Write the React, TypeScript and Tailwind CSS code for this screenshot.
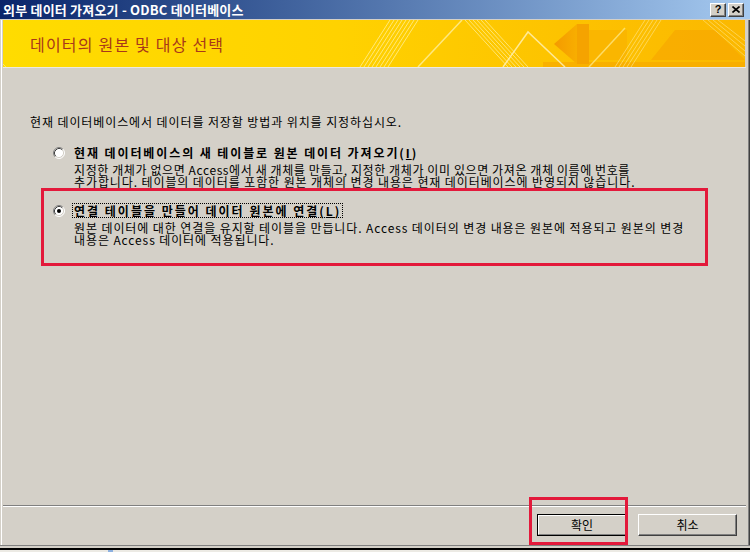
import React from "react";

function Radio({ checked }: { checked?: boolean }) {
  return (
    <svg width="12" height="12" viewBox="0 0 12 12" className="shrink-0">
      <circle cx="6" cy="6" r="5" fill="#ffffff" />
      <path d="M2.11 9.89 A5.5 5.5 0 0 1 9.89 2.11" fill="none" stroke="#808080" strokeWidth="1" />
      <path d="M9.89 2.11 A5.5 5.5 0 0 1 2.11 9.89" fill="none" stroke="#ffffff" strokeWidth="1" />
      <path d="M2.82 9.18 A4.5 4.5 0 0 1 9.18 2.82" fill="none" stroke="#404040" strokeWidth="1" />
      <path d="M9.18 2.82 A4.5 4.5 0 0 1 2.82 9.18" fill="none" stroke="#d4d0c8" strokeWidth="1" />
      {checked && <circle cx="6" cy="6" r="2" fill="#000000" />}
    </svg>
  );
}

function TitleButton({ children }: { children: React.ReactNode }) {
  return (
    <div className="w-[16px] h-[14px] bg-[#d4d0c8] border-t border-l border-white border-b border-r border-b-[#404040] border-r-[#404040] shadow-[inset_-1px_-1px_#808080] flex items-center justify-center text-[11px] font-bold leading-none text-black font-['Liberation_Sans',sans-serif]">
      {children}
    </div>
  );
}

function HeaderArt() {
  return (
    <svg width="742" height="47" viewBox="0 0 742 47" className="absolute inset-0">
      <defs>
        <linearGradient id="hg" x1="0" y1="0" x2="1" y2="0">
          <stop offset="0" stopColor="#ffdc00" />
          <stop offset="0.45" stopColor="#ffd200" />
          <stop offset="0.75" stopColor="#fdc300" />
          <stop offset="1" stopColor="#fbb800" />
        </linearGradient>
        <linearGradient id="ag" x1="0" y1="0" x2="1" y2="0">
          <stop offset="0" stopColor="#f49a00" />
          <stop offset="1" stopColor="#f8ae00" />
        </linearGradient>
      </defs>
      <rect x="0" y="0" width="742" height="47" fill="url(#hg)" />
      <rect x="540" y="42" width="202" height="5" fill="#f7aa00" opacity="0.7" />
      <g stroke="#fff2a0" strokeWidth="1" opacity="0.75">
        <line x1="357" y1="47" x2="387" y2="0" />
        <line x1="361" y1="47" x2="391" y2="0" />
        <line x1="365" y1="47" x2="395" y2="0" />
        <line x1="369" y1="47" x2="399" y2="0" />
        <line x1="373" y1="47" x2="403" y2="0" />
        <line x1="377" y1="47" x2="407" y2="0" />
        <line x1="381" y1="47" x2="411" y2="0" />
        <line x1="385" y1="47" x2="415" y2="0" />
      </g>
      <line x1="415" y1="47" x2="459" y2="0" stroke="#fff0a0" strokeWidth="1.5" opacity="0.8" />
      <g stroke="#fff2a0" strokeWidth="1" opacity="0.7">
        <line x1="462" y1="0" x2="505" y2="47" />
        <line x1="466" y1="0" x2="509" y2="47" />
        <line x1="470" y1="0" x2="513" y2="47" />
        <line x1="474" y1="0" x2="517" y2="47" />
        <line x1="478" y1="0" x2="521" y2="47" />
        <line x1="482" y1="0" x2="525" y2="47" />
      </g>
      <polyline points="500,47 525,12 562,47" fill="none" stroke="#fff0b0" strokeWidth="1.5" opacity="0.85" />
      <polygon points="551,24 574,4 574,44" fill="url(#ag)" />
      <rect x="574" y="4" width="12" height="40" fill="#f5a300" />
      <rect x="586" y="10" width="38" height="30" fill="#f9b400" opacity="0.85" />
      <line x1="586" y1="47" x2="622" y2="8" stroke="#ffe680" strokeWidth="1.5" opacity="0.8" />
      <g stroke="#ffe890" strokeWidth="1" opacity="0.6">
        <line x1="612" y1="47" x2="642" y2="0" />
        <line x1="616" y1="47" x2="646" y2="0" />
        <line x1="620" y1="47" x2="650" y2="0" />
        <line x1="624" y1="47" x2="654" y2="0" />
        <line x1="628" y1="47" x2="658" y2="0" />
      </g>
      <polygon points="648,40 672,10 712,10 742,40" fill="#f7aa00" opacity="0.8" />
      <g stroke="#ffe890" strokeWidth="1" opacity="0.55">
        <line x1="700" y1="0" x2="742" y2="36" />
        <line x1="705" y1="0" x2="742" y2="31" />
        <line x1="710" y1="0" x2="742" y2="26" />
        <line x1="715" y1="0" x2="742" y2="21" />
      </g>
      <line x1="0" y1="44" x2="3" y2="47" stroke="#fff2a0" strokeWidth="1" opacity="0.6" />
    </svg>
  );
}

export default function App() {
  return (
    <div className="w-[750px] h-[552px] bg-[#d4d0c8] flex flex-col overflow-hidden relative font-['Noto_Sans_CJK_KR',sans-serif] text-black">
      {/* Title bar */}
      <div className="h-[19px] shrink-0 flex items-center justify-between bg-gradient-to-r from-[#0a246a] to-[#a6caf0] pl-[3px] pr-[6px]">
        <span className="text-white font-bold text-[13px] leading-none tracking-[0.2px]">
          외부 데이터 가져오기 - ODBC 데이터베이스
        </span>
        <div className="flex gap-[2px]">
          <TitleButton>?</TitleButton>
          <TitleButton>
            <svg width="8" height="7" viewBox="0 0 8 7">
              <path d="M0.5 0.5 L7.5 6.5 M7.5 0.5 L0.5 6.5" stroke="#000" strokeWidth="1.6" />
            </svg>
          </TitleButton>
        </div>
      </div>

      {/* framed content */}
      <div className="mt-[1px] h-[525px] shrink-0 border-r border-r-[#404040]">
        <div className="ml-[1px] h-full border-l border-white pl-[1px] border-r border-r-[#808080] pr-[2px] flex flex-col">
          {/* header */}
          <div className="h-[48px] shrink-0 border-b border-[#ece9e2] relative">
            <div className="h-[47px] relative flex items-center pl-[27px]">
              <HeaderArt />
              <span className="relative text-[16px] leading-none text-[#a8381a] tracking-[1.2px]">
                데이터의 원본 및 대상 선택
              </span>
            </div>
          </div>

          {/* body */}
          <div className="flex-1 flex flex-col pl-[27px] pt-[47px] text-[12px] tracking-[0.9px]">
            <div className="leading-[14px] h-[14px] whitespace-nowrap">
              현재 데이터베이스에서 데이터를 저장할 방법과 위치를 지정하십시오.
            </div>

            {/* Option 1 */}
            <div className="mt-[16px] ml-[23px] flex items-center h-[15px]">
              <Radio />
              <span className="ml-[7px] border border-transparent px-[1px] leading-[13px] font-bold tracking-[1.9px] whitespace-nowrap">
                현재 데이터베이스의 새 테이블로 원본 데이터 가져오기(<span className="underline">I</span>)
              </span>
            </div>
            <div className="mt-[4px] ml-[44px] leading-[12px] whitespace-nowrap">
              <div className="tracking-[0.6px]">지정한 개체가 없으면 Access에서 새 개체를 만들고, 지정한 개체가 이미 있으면 가져온 개체 이름에 번호를</div>
              <div>추가합니다. 테이블의 데이터를 포함한 원본 개체의 변경 내용은 현재 데이터베이스에 반영되지 않습니다.</div>
            </div>

            {/* Option 2 (highlighted) */}
            <div className="ml-[11px] w-[667px] h-[78px] border-[3px] border-[#e3193b] pt-[12px] pl-[9px]">
              <div className="flex items-center h-[15px]">
                <Radio checked />
                <span className="ml-[7px] border border-dotted border-black px-[1px] leading-[13px] font-bold tracking-[2px] whitespace-nowrap">
                  연결 테이블을 만들어 데이터 원본에 연결(<span className="underline">L</span>)
                </span>
              </div>
              <div className="mt-[4px] ml-[21px] leading-[12px] whitespace-nowrap">
                <div>원본 데이터에 대한 연결을 유지할 테이블을 만듭니다. Access 데이터의 변경 내용은 원본에 적용되고 원본의 변경</div>
                <div>내용은 Access 데이터에 적용됩니다.</div>
              </div>
            </div>

            <div className="flex-1" />
          </div>

          {/* separator */}
          <div className="shrink-0 border-t border-[#808080] border-b border-b-white" />

          {/* buttons */}
          <div className="h-[38px] shrink-0 flex justify-end items-start pt-[7px] pr-[9px] gap-[11px] text-[12px]">
            <button className="w-[90px] h-[22px] border border-black bg-[#d4d0c8]">
              <div className="w-full h-full border-t border-l border-white border-b border-r border-b-[#808080] border-r-[#808080] flex items-center justify-center leading-none">
                확인
              </div>
            </button>
            <button className="w-[99px] h-[22px] bg-[#d4d0c8] border-t border-l border-white border-b border-r border-b-[#404040] border-r-[#404040] shadow-[inset_-1px_-1px_#808080] flex items-center justify-center leading-none">
              취소
            </button>
          </div>
        </div>
      </div>

      {/* bottom frame + taskbar sliver */}
      <div className="shrink-0 h-[1px] bg-[#808080]" />
      <div className="shrink-0 h-[2px] bg-[#d4d0c8]" />
      <div className="shrink-0 h-[2px] bg-black" />
      <div className="shrink-0 h-[2px] bg-[#eceae4] flex">
        <div className="ml-[108px] w-[5px] h-full bg-[#8cb0e0]" />
      </div>

      {/* annotation around OK button */}
      <div className="absolute left-[529px] top-[497px] w-[99px] h-[48px] border-[3px] border-[#e3193b] pointer-events-none" />
    </div>
  );
}
